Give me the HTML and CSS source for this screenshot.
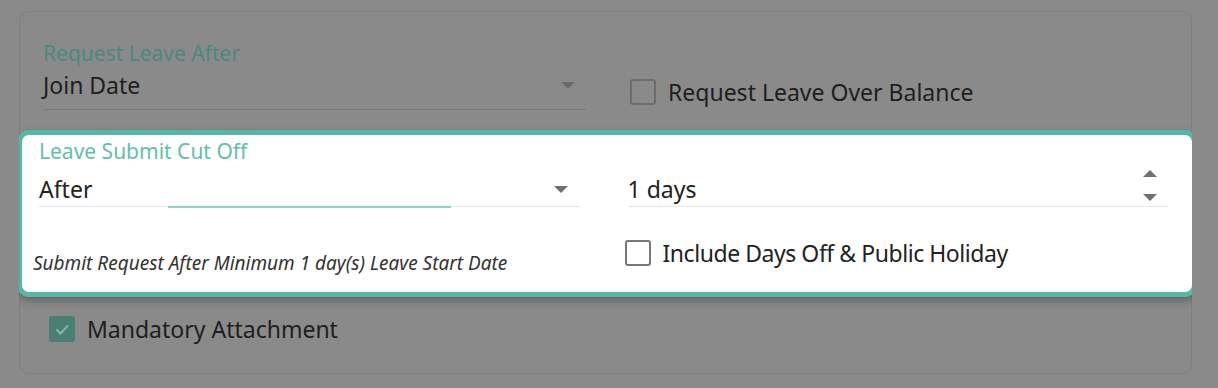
FILE: index.html
```html
<!DOCTYPE html>
<html lang="en">
<head>
  <meta charset="UTF-8">
  <title>Leave Settings</title>
  <link rel="stylesheet" href="styles.css">
</head>
<body>
  <div class="card">
    <div class="top-row">
      <div class="field">
        <label class="field-label dim">Request Leave After</label>
        <div class="field-value">
          <span>Join Date</span>
          <span class="caret"></span>
        </div>
      </div>
      <div class="check-row over">
        <span class="box"></span>
        <span>Request Leave Over Balance</span>
      </div>
    </div>

    <div class="highlight">
      <label class="field-label">Leave Submit Cut Off</label>
      <div class="hl-grid">
        <div class="field-value light">
          <span>After</span>
          <span class="caret"></span>
          <span class="focus-line"></span>
        </div>
        <div class="field-value light">
          <span>1 days</span>
          <span class="spinner">
            <span class="up"></span>
            <span class="down"></span>
          </span>
        </div>
      </div>
      <div class="hl-grid bottom">
        <p class="hint">Submit Request After Minimum 1 day(s) Leave Start Date</p>
        <div class="check-row">
          <span class="box"></span>
          <span class="tight">Include Days Off &amp; Public Holiday</span>
        </div>
      </div>
    </div>

    <div class="check-row mandatory">
      <span class="box checked">
        <svg width="26" height="26" viewBox="0 0 26 26"><polyline points="7.5,13.5 11.5,17.5 19,9.5" fill="none" stroke="#8bb2aa" stroke-width="2"/></svg>
      </span>
      <span>Mandatory Attachment</span>
    </div>
  </div>
</body>
</html>
```

FILE: styles.css
```css
body {
  margin: 11px 26px 0 19px;
  background-color: #8a8a8a;
  font-family: "Noto Sans", sans-serif;
  color: #1e1e1e;
}

.card {
  border: 1px solid #7f7f7f;
  border-radius: 10px;
  padding: 28px 0 31px 23px;
}

.top-row {
  display: grid;
  grid-template-columns: 543px 1fr;
  column-gap: 44px;
}

.field-label {
  display: block;
  font-size: 21px;
  line-height: 26px;
  color: #5fc0ae;
}

.field-label.dim {
  color: #4b897d;
}

.field-value {
  position: relative;
  display: flex;
  align-items: center;
  justify-content: space-between;
  height: 34px;
  margin-top: 2px;
  padding-bottom: 7px;
  font-size: 23px;
  line-height: 34px;
  border-bottom: 1px solid #7b7b7b;
}

.caret {
  width: 0;
  height: 0;
  margin-right: 11px;
  border-left: 7.5px solid transparent;
  border-right: 7.5px solid transparent;
  border-top: 7px solid #6b6b6b;
}

.check-row {
  display: flex;
  align-items: center;
  gap: 12px;
  font-size: 23px;
  line-height: 26px;
}

.check-row.over {
  align-self: end;
  margin-bottom: 5px;
}

.box {
  box-sizing: border-box;
  width: 26px;
  height: 26px;
  border: 2px solid #6c6c6c;
  border-radius: 3px;
}

.highlight {
  margin: 20px -6px 0 -26px;
  padding: 3px 24px 26px 17px;
  background-color: #fff;
  border: 5px solid #52b9a8;
  border-radius: 12px;
  box-shadow: 0 4px 8px rgba(0, 0, 0, 0.28);
  color: #222;
}

.hl-grid {
  display: grid;
  grid-template-columns: 1fr 1fr;
  column-gap: 48px;
}

.field-value.light {
  margin-top: 8px;
  padding-bottom: 0;
  border-bottom-color: #e6e6ef;
}

.field-value.light .caret {
  margin-right: 12px;
  border-top-color: #707070;
}

.focus-line {
  position: absolute;
  left: 129px;
  width: 283px;
  bottom: -2px;
  height: 2px;
  background-color: #8ed2c6;
}

.spinner {
  display: flex;
  flex-direction: column;
  gap: 17px;
  margin: 0 11px 7px 0;
}

.spinner .up {
  border-left: 7.5px solid transparent;
  border-right: 7.5px solid transparent;
  border-bottom: 7px solid #707070;
}

.spinner .down {
  border-left: 7.5px solid transparent;
  border-right: 7.5px solid transparent;
  border-top: 7px solid #707070;
}

.bottom {
  margin-top: 33px;
}

.hint {
  align-self: end;
  margin: 0 0 -8px -6px;
  font-size: 19px;
  font-style: italic;
  line-height: 22px;
  color: #333;
}

.bottom .check-row {
  align-self: start;
  margin-left: -3px;
}

.bottom .box {
  border-color: #777;
}

.tight {
  letter-spacing: -0.45px;
}

.check-row.mandatory {
  margin: 19px 0 0 6px;
}

.box.checked {
  border: none;
  background-color: #4a7f74;
}

.box.checked svg {
  display: block;
}
```
